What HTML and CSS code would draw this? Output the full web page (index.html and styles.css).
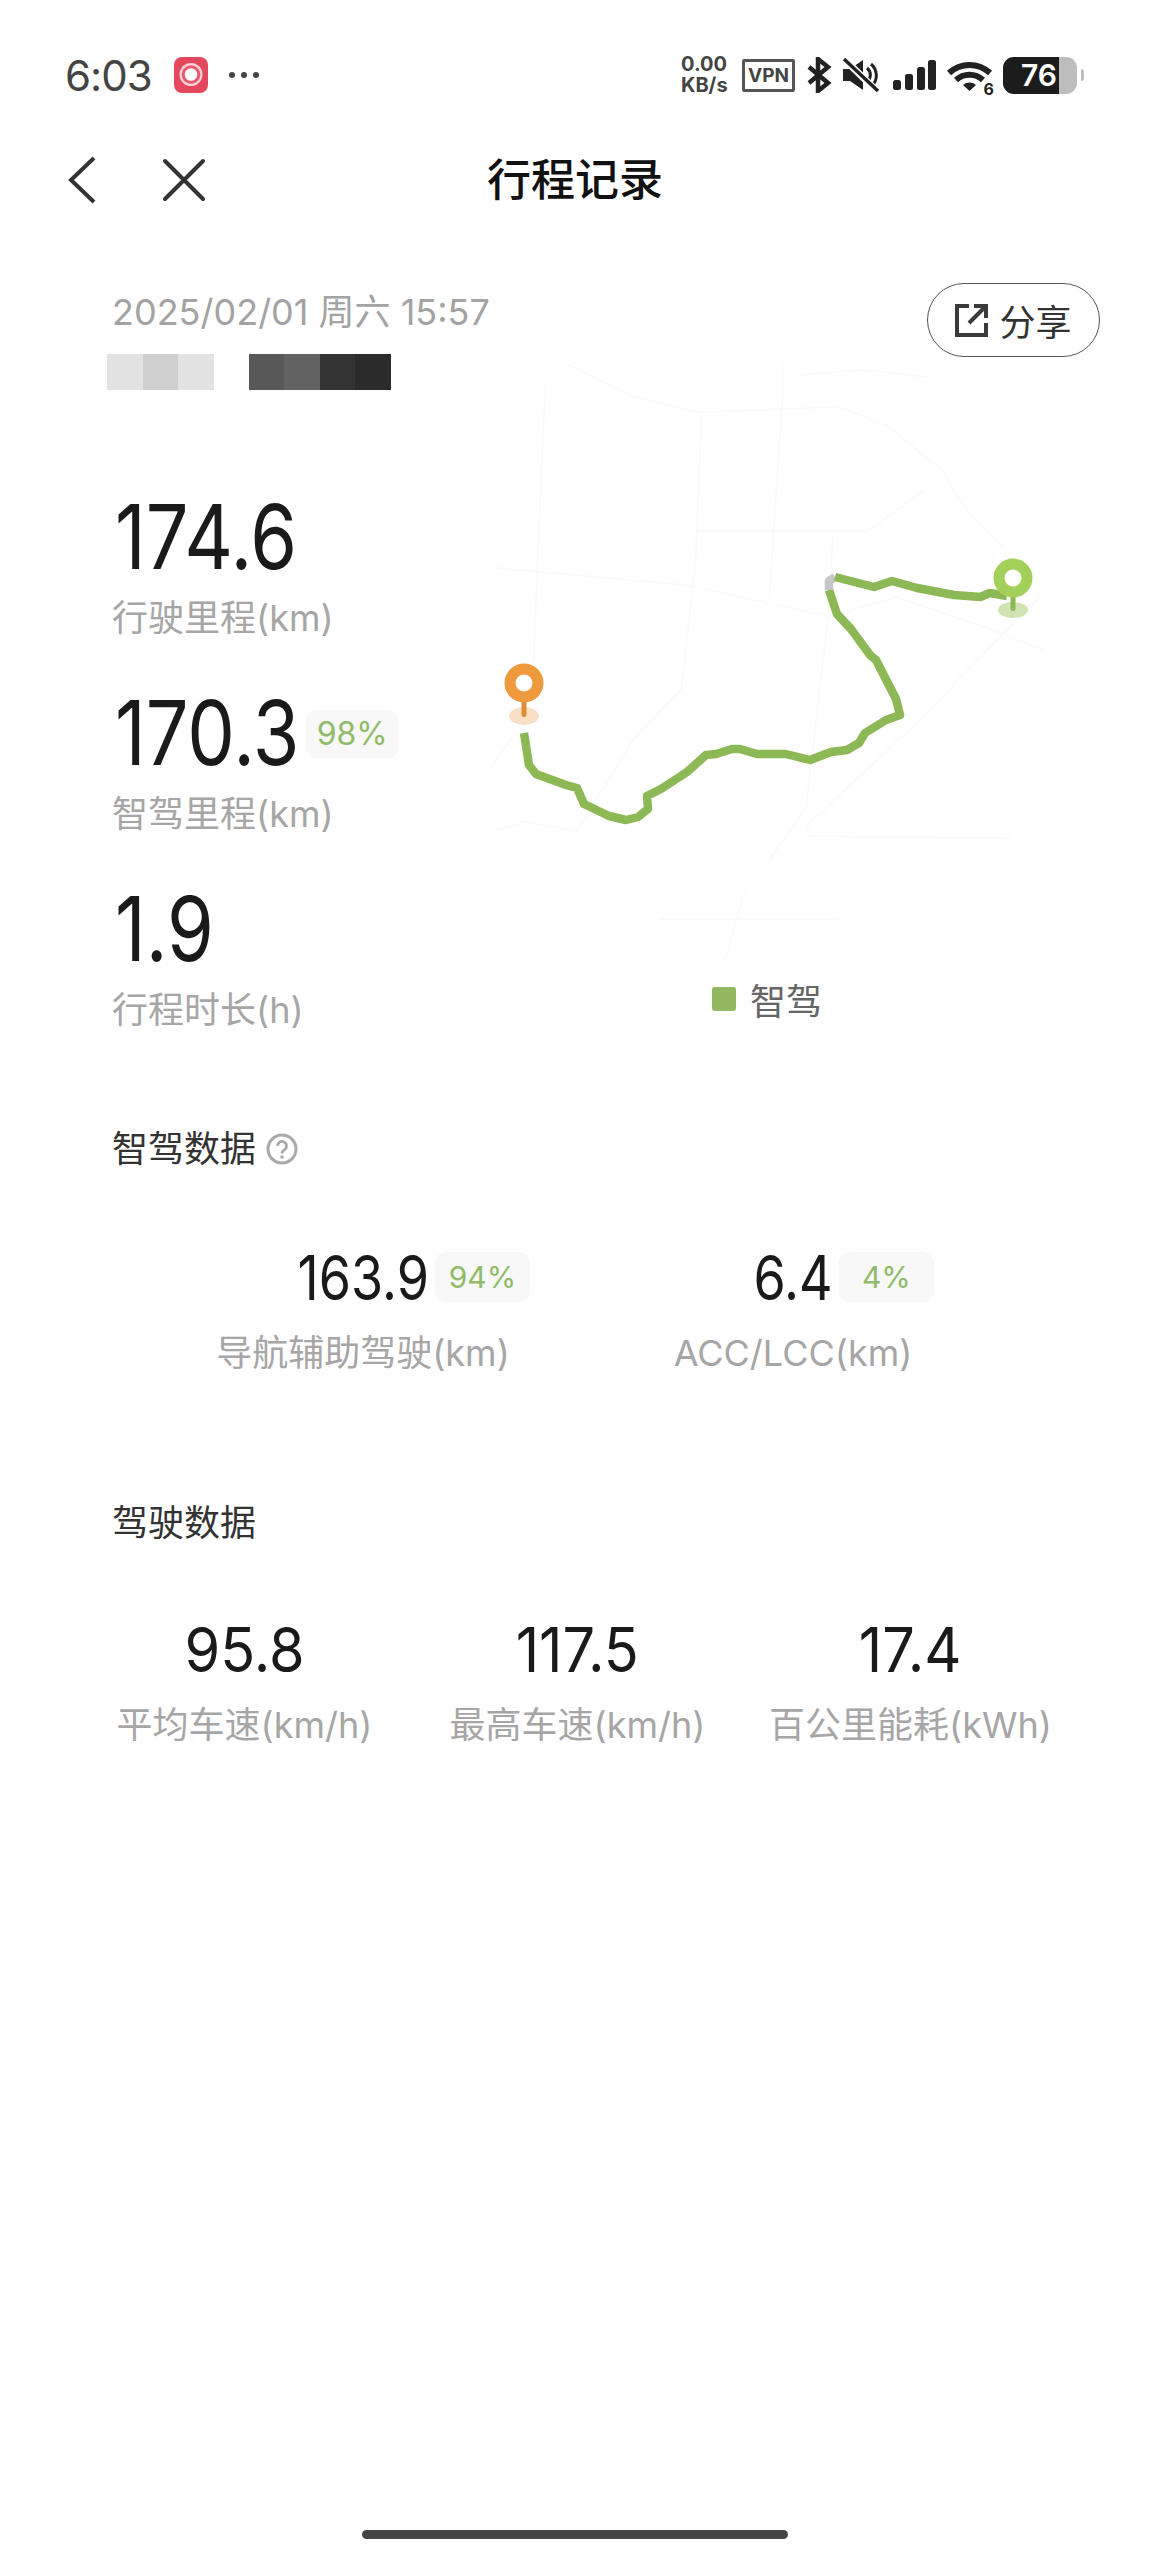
FILE: index.html
```html
<!DOCTYPE html>
<html>
<head>
<meta charset="utf-8">
	<title>行程记录</title>
	<link rel="stylesheet" href="styles.css">
</head>
<body>
<div class="status">
	<div class="status-left">
		<span class="time">6:03</span>
		<svg class="rec" width="34" height="36" viewBox="0 0 34 36"><rect width="34" height="36" rx="8" fill="#e4485c"/><circle cx="17" cy="17.500" r="11.500" fill="#fbcfd6"/><circle cx="17" cy="17.500" r="9.300" fill="#e9596c"/><circle cx="17" cy="17.500" r="6.300" fill="#fff"/></svg>
		<svg class="more" width="32" height="8" viewBox="0 0 32 8"><circle cx="4" cy="4" r="3" fill="#444"/><circle cx="16" cy="4" r="3" fill="#444"/><circle cx="28" cy="4" r="3" fill="#444"/></svg>
	</div>
	<div class="status-right">
		<div class="speed"><span>0.00</span><span>KB/s</span></div>
		<div class="vpn">VPN</div>
		<svg width="26" height="36" viewBox="0 0 26 36"><path d="M3 10 L22 26 L12 34 L12 2 L22 10 L3 26" fill="none" stroke="#222" stroke-width="4.500"/></svg>
		<svg width="40" height="36" viewBox="0 0 40 36"><path d="M2 12h7l13-9v30l-13-9H2z" fill="#222"/><path d="M26 11a9 9 0 0 1 0 14M30 7a15 15 0 0 1 1 22" fill="none" stroke="#222" stroke-width="3"/><path d="M3 2 L37 35" stroke="#fff" stroke-width="7"/><path d="M3 2 L37 34" stroke="#222" stroke-width="3.500"/></svg>
		<svg width="43" height="30" viewBox="0 0 43 30"><rect y="20" width="8" height="10" rx="2.500" fill="#222"/><rect x="12" y="14" width="8" height="16" rx="2.500" fill="#222"/><rect x="24" y="7" width="8" height="23" rx="2.500" fill="#222"/><rect x="35" width="8" height="30" rx="2.500" fill="#222"/></svg>
		<div class="wifi">
			<svg width="47" height="32" viewBox="0 0 47 32"><path d="M3 14a30 30 0 0 1 41 0M10 21a20 20 0 0 1 27 0" fill="none" stroke="#222" stroke-width="6"/><path d="M17 26a10 10 0 0 1 13 0l-6.500 6z" fill="#222"/></svg>
			<span class="wifi-num">6</span>
		</div>
		<div class="battery"><div class="battery-fill"></div><span class="battery-num">76</span></div>
		<div class="battery-tip"></div>
	</div>
</div>

<div class="nav">
	<svg class="nav-back" width="30" height="48" viewBox="0 0 30 48"><path d="M27 2 L4 24 L27 46" fill="none" stroke="#333" stroke-width="4"/></svg>
	<svg class="nav-close" width="44" height="44" viewBox="0 0 44 44"><path d="M3 3 L41 41 M41 3 L3 41" fill="none" stroke="#333" stroke-width="4" stroke-linecap="round"/></svg>
	<div class="nav-title">行程记录</div>
</div>

<div class="trip">
	<div class="trip-left">
		<div class="date">2025/02/01 周六 15:57</div>
		<div class="plate">
			<div class="plate-group">
				<i class="px c1"></i><i class="px c2"></i><i class="px c1"></i>
			</div>
			<div class="plate-group">
				<i class="px c3"></i><i class="px c4"></i><i class="px c5"></i><i class="px c6"></i>
			</div>
		</div>
		<div class="stat">
			<div class="stat-num"><span class="narrow">174.6</span></div>
			<div class="label">行驶里程(km)</div>
		</div>
		<div class="stat">
			<div class="stat-num"><span class="narrow">170.3<span class="badge stat-badge">98%</span></span></div>
			<div class="label">智驾里程(km)</div>
		</div>
		<div class="stat">
			<div class="stat-num"><span class="narrow">1.9</span></div>
			<div class="label">行程时长(h)</div>
		</div>
	</div>
	<div class="trip-right">
		<div class="share">
			<svg width="34" height="34" viewBox="0 0 34 34"><path d="M14 3H2v29h29V20" fill="none" stroke="#3a3a3a" stroke-width="4"/><path d="M14 20 L29 5 M19 3h12v12" fill="none" stroke="#3a3a3a" stroke-width="4"/></svg>
			<span>分享</span>
		</div>
		<svg class="map" width="640" height="620" viewBox="470 360 640 620">
			<g transform="translate(470 270) scale(.41 .488)" class="roads">
				<path d="M240 195L400 260L560 292L760 285L900 280L1020 320L1150 410L1200 480L1300 570"/>
				<path d="M185 230L180 300L155 800"/>
				<path d="M800 215L960 205L1120 220"/>
				<path d="M740 150L765 210L760 290L740 540L730 680"/>
				<path d="M565 295L550 600L515 860L400 960L260 1150"/>
				<path d="M60 610L520 645L880 710L1040 670L1300 745L1400 780"/>
				<path d="M555 535L970 535L1110 450"/>
				<path d="M885 545L875 700L820 1100L730 1210"/>
				<path d="M1390 670L1300 745L1100 920L820 1140L830 1160L1320 1165"/>
				<path d="M50 1020L110 950"/>
				<path d="M60 1150L135 1130L260 1150"/>
				<path d="M460 1330L900 1330M670 1270L620 1420"/>
			</g>
			<path class="route" d="M524 733L529 765L536 774L566 785L577 788L584 804L609 816L626 820L638 817L648 809L647 796L661 789L687 772L706 755L716 754L732 749L740 749L757 754L786 754L810 760L831 752L847 750L859 743L865 733L886 720L900 715L896 699L876 660L870 655L851 629L837 614L829 590"/>
			<path class="route-gap" d="M829 590L829 581L835 577"/>
			<path class="route" d="M835 577L874 587L892 581L917 588L954 595L980 597L990 593L1007 596"/>
			<ellipse cx="524" cy="716" rx="15" ry="9" fill="#f9dfc6"/>
			<rect x="521.500" y="695" width="5" height="22" rx="2.500" fill="#e08b3a"/>
			<circle cx="524" cy="683" r="14" fill="none" stroke="#ee9a3c" stroke-width="11"/>
			<ellipse cx="1013" cy="610" rx="15" ry="8" fill="#cfe3b3"/>
			<rect x="1010.500" y="590" width="5" height="21" rx="2.500" fill="#8db856"/>
			<circle cx="1013" cy="578" r="14" fill="none" stroke="#a3d058" stroke-width="11"/>
		</svg>
		<div class="legend"><i class="legend-dot"></i><span>智驾</span></div>
	</div>
</div>

<div class="section-title sec-first">智驾数据
	<svg class="help" width="32" height="32" viewBox="0 0 32 32"><circle cx="16" cy="16" r="14" fill="none" stroke="#aaa" stroke-width="3"/><path d="M11.500 13a4.500 4.500 0 1 1 7 3.700c-1.500 1-2.500 1.800-2.500 3.800" fill="none" stroke="#aaa" stroke-width="2.800"/><circle cx="16" cy="24" r="1.800" fill="#aaa"/></svg>
</div>
<div class="metrics two">
	<div class="metric">
		<div class="metric-num"><span class="narrow center">163.9<span class="badge metric-badge">94%</span></span></div>
		<div class="label">导航辅助驾驶(km)</div>
	</div>
	<div class="metric">
		<div class="metric-num"><span class="narrow center">6.4<span class="badge metric-badge">4%</span></span></div>
		<div class="label">ACC/LCC(km)</div>
	</div>
</div>

<div class="section-title sec-second">驾驶数据</div>
<div class="metrics three">
	<div class="metric">
		<div class="metric-num"><span class="narrow center wider">95.8</span></div>
		<div class="label">平均车速(km/h)</div>
	</div>
	<div class="metric">
		<div class="metric-num"><span class="narrow center wider">117.5</span></div>
		<div class="label">最高车速(km/h)</div>
	</div>
	<div class="metric">
		<div class="metric-num"><span class="narrow center wider">17.4</span></div>
		<div class="label">百公里能耗(kWh)</div>
	</div>
</div>

<div class="home-bar"></div>
</body>
</html>
```
FILE: styles.css
```css
*{
	margin: 0;
	padding: 0;
	box-sizing: border-box;
}
html,body{
	width: 100%;
	height: 100%;
}
body{
	display: flex;
	flex-direction: column;
	height: 2556px;
	background: #fff;
	font-family: Inter, "Noto Sans CJK SC", sans-serif;
	color: #1a1a1a;
	overflow: hidden;
}
/* status bar */
.status{
	display: flex;
	justify-content: space-between;
	align-items: center;
	height: 150px;
	padding: 0 66px 0 65px;
}
.status-left{
	display: flex;
	align-items: center;
}
.time{
	font-size: 42px;
	letter-spacing: -1px;
	color: #444;
	width: 109px;
}
.more{
	margin-left: 20px;
}
.status-right{
	display: flex;
	align-items: center;
}
.status-right svg{
	display: block;
}
.speed{
	display: flex;
	flex-direction: column;
	width: 61px;
	font-size: 20px;
	line-height: 21px;
	font-weight: 700;
	color: #444;
}
.vpn{
	width: 53px;
	height: 33px;
	border: 3px solid #555;
	border-radius: 2px;
	font-size: 19px;
	line-height: 27px;
	font-weight: 700;
	text-align: center;
	color: #444;
	margin-right: 11px;
}
.status-right svg:nth-of-type(2){
	margin-left: 9px;
}
.status-right > svg:nth-of-type(3){
	margin-left: 12px;
}
.wifi{
	position: relative;
	margin-left: 10px;
}
.wifi-num{
	position: absolute;
	right: -1px;
	bottom: -6px;
	font-size: 16px;
	line-height: 16px;
	font-weight: 700;
	color: #222;
}
.battery{
	position: relative;
	width: 74px;
	height: 37px;
	margin-left: 10px;
	border-radius: 11px;
	background: #bdbdbd;
	overflow: hidden;
}
.battery-fill{
	width: 56px;
	height: 37px;
	background: #1c1c1c;
}
.battery-num{
	position: absolute;
	left: 18px;
	top: 0;
	font-size: 30px;
	line-height: 37px;
	font-weight: 600;
	color: #fff;
}
.battery-tip{
	width: 3px;
	height: 12px;
	margin-left: 4px;
	border-radius: 0 3px 3px 0;
	background: #bdbdbd;
}
/* nav */
.nav{
	position: relative;
	display: flex;
	align-items: center;
	height: 60px;
	padding-left: 67px;
}
.nav-close{
	margin-left: 65px;
}
.nav-title{
	position: absolute;
	left: 0;
	right: 0;
	top: 0;
	text-align: center;
	font-size: 44px;
	line-height: 60px;
	font-weight: 500;
	color: #111;
}
/* trip */
.trip{
	display: flex;
	margin-top: 73px;
	padding-left: 112px;
}
.trip-left{
	width: 358px;
}
.date{
	font-size: 36px;
	line-height: 58px;
	color: #a3a3a3;
	white-space: nowrap;
}
.plate{
	display: flex;
	gap: 35px;
	margin-top: 13px;
	margin-left: -5px;
}
.plate-group{
	display: flex;
}
.px{
	display: block;
	width: 35.500px;
	height: 36px;
}
.c1{ background: #e2e2e2; }
.c2{ background: #cfcfcf; }
.c3{ background: #585858; }
.c4{ background: #626262; }
.c5{ background: #333; }
.c6{ background: #2b2b2b; }
.stat{
	margin-bottom: 34px;
}
.plate + .stat{
	margin-top: 97px;
}
/* digits in the reference are narrower than any installed font */
.narrow{
	position: relative;
	display: inline-block;
	transform: scaleX(.84);
	transform-origin: left center;
}
.center{
	transform-origin: center;
}
.wider{
	transform: scaleX(.93);
}
.badge{
	position: absolute;
	left: 100%;
	border-radius: 12px;
	background: #f7f8f7;
	text-align: center;
	color: #90bb68;
	transform: scaleX(1.19);
	transform-origin: left center;
}
.stat-num{
	height: 100px;
	padding-left: 3px;
	font-size: 90px;
	line-height: 100px;
	white-space: nowrap;
}
.stat-badge{
	top: 27px;
	margin-left: 7px;
	width: 93px;
	height: 48px;
	font-size: 32px;
	line-height: 48px;
}
.label{
	font-size: 36px;
	line-height: 62px;
	color: #a6a6a6;
	white-space: nowrap;
}
.trip-right{
	display: flex;
	flex-direction: column;
	width: 640px;
}
.share{
	display: flex;
	align-items: center;
	justify-content: center;
	gap: 10px;
	align-self: flex-end;
	width: 173px;
	height: 74px;
	margin-right: 10px;
	border: 1.500px solid #555;
	border-radius: 37px;
	font-size: 36px;
	color: #333;
}
.map{
	display: block;
	margin-top: 3px;
}
.roads path{
	fill: none;
	stroke: #fafbfb;
	stroke-width: 2px;
	vector-effect: non-scaling-stroke;
}
.route,.route-gap{
	fill: none;
	stroke: #8db856;
	stroke-width: 8.500px;
	stroke-linejoin: round;
}
.route-gap{
	stroke: #c6c6c6;
}
.legend{
	display: flex;
	align-items: center;
	height: 40px;
	margin-top: -1px;
	padding-left: 242px;
	font-size: 36px;
	color: #666;
}
.legend-dot{
	display: block;
	width: 24px;
	height: 24px;
	margin-right: 14px;
	border-radius: 3px;
	background: #92b860;
}
/* data sections */
.section-title{
	display: flex;
	align-items: center;
	gap: 10px;
	height: 50px;
	padding-left: 112px;
	font-size: 36px;
	line-height: 50px;
	color: #333;
}
.sec-first{
	margin-top: 49px;
}
.sec-second{
	margin-top: 118px;
}
.metrics{
	display: grid;
	margin-top: 69px;
}
.two{
	grid-template-columns: 430px 430px;
	padding-left: 148px;
}
.three{
	grid-template-columns: repeat(3,333px);
	margin-top: 67px;
	padding-left: 78px;
}
.metric{
	text-align: center;
}
.metric-num{
	font-size: 62px;
	line-height: 70px;
}
.metric .label{
	margin-top: 13px;
	line-height: 54px;
}
.metric-badge{
	top: 9px;
	margin-left: 7px;
	width: 96px;
	height: 50px;
	font-size: 30px;
	line-height: 50px;
}
.home-bar{
	width: 426px;
	height: 9px;
	margin: auto auto 17px;
	border-radius: 5px;
	background: #444;
}
```
